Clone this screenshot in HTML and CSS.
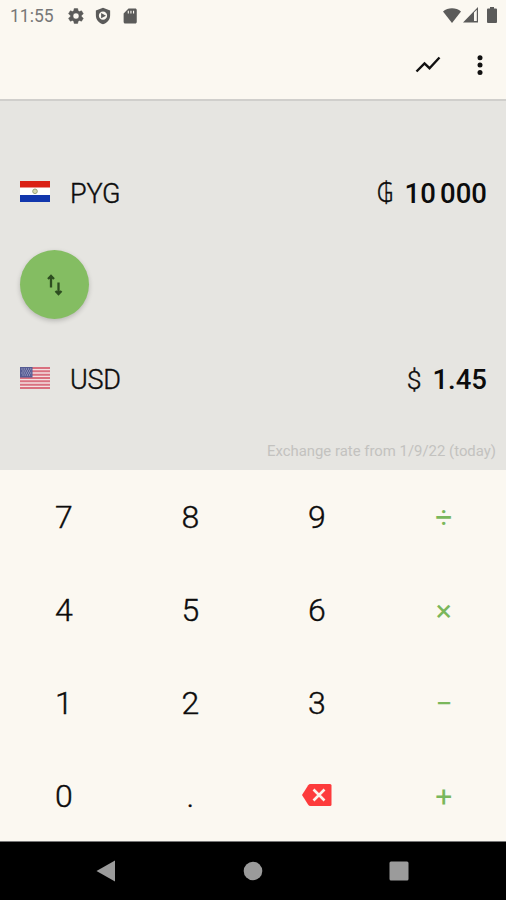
FILE: index.html
```html
<!DOCTYPE html>
<html lang="en">
<head>
    <meta charset="UTF-8">
    <meta name="viewport" content="width=device-width, initial-scale=1.0">
    <title>Currency Converter</title>
    <link rel="stylesheet" href="styles.css">
</head>
<body>
    <div class="status-bar">
        <span class="clock">11:55</span>
        <svg class="status-icon gear" width="18" height="18" viewBox="0 0 24 24"><path fill-rule="evenodd" d="M19.4 13a7.500 7.500 0 0 0 0-2l2.100-1.600a.5.5 0 0 0 .1-.7l-2-3.400a.5.5 0 0 0-.6-.2l-2.500 1a7.300 7.300 0 0 0-1.700-1L14.400 2.400a.5.5 0 0 0-.5-.4h-4a.5.5 0 0 0-.5.4L9 5.100a7.700 7.700 0 0 0-1.700 1l-2.500-1a.5.5 0 0 0-.6.200l-2 3.400a.5.5 0 0 0 .1.700L4.500 11a7.500 7.500 0 0 0 0 2l-2.200 1.600a.5.5 0 0 0-.1.700l2 3.400c.1.200.4.300.6.200l2.500-1c.5.400 1.100.700 1.700 1l.4 2.700c0 .2.200.4.500.4h4c.3 0 .5-.2.500-.4l.4-2.700a7.300 7.300 0 0 0 1.700-1l2.500 1c.2.100.5 0 .6-.2l2-3.400a.5.5 0 0 0-.1-.7zM12 16a4 4 0 1 1 0-8 4 4 0 0 1 0 8z"/></svg>
        <svg class="status-icon shield" width="18" height="18" viewBox="0 0 24 24"><path fill-rule="evenodd" d="M12 1 2.500 4.500V11c0 6 4 10.500 9.500 12 5.500-1.500 9.500-6 9.500-12V4.500zM12 6a5.500 5.500 0 1 1 0 11 5.500 5.500 0 0 1 0-11zM9.500 8v7l6.500-3.500z"/></svg>
        <svg class="status-icon card" width="18" height="18" viewBox="0 0 24 24"><path fill-rule="evenodd" d="M19 2h-9L3.500 8.500V20c0 1.100.9 2 2 2H19c1.100 0 2-.9 2-2V4c0-1.100-.9-2-2-2zM9 5h1.500v3.500H9zM12.500 5H14v3.500h-1.500zM16 5h1.500v3.500H16z"/></svg>
        <div class="system-icons">
            <svg class="status-icon" width="18" height="15" viewBox="0 0 18 15"><path d="M9 15 0 3.500C5 -.8 13-.8 18 3.500z"/></svg>
            <svg class="status-icon signal" width="16" height="16" viewBox="0 0 16 16"><path d="M0 15.500 15 0v15.500zM11 5.500V14h2.800V2.700z" fill-rule="evenodd"/></svg>
            <svg class="status-icon battery" width="10" height="16" viewBox="0 0 10 16"><path d="M3 0h4v1.500h2q1 0 1 1V15q0 1-1 1H1q-1 0-1-1V2.500q0-1 1-1h2z"/></svg>
        </div>
    </div>

    <div class="app-bar">
        <svg class="chart" width="26" height="18" viewBox="0 0 26 18"><path d="M1.500 15.500 9.500 7.500l5 4.700L24.500 1.500"/></svg>
        <svg class="more" width="6" height="20" viewBox="0 0 6 20"><circle cx="3" cy="2.700" r="2.500"/><circle cx="3" cy="10" r="2.500"/><circle cx="3" cy="17.500" r="2.500"/></svg>
    </div>

    <div class="converter">
        <div class="currency-row">
            <svg class="flag" width="30" height="21" viewBox="0 0 30 21">
                <rect width="30" height="21" fill="#fff"/>
                <rect width="30" height="6.500" fill="#da2015"/>
                <rect y="14" width="30" height="7" fill="#1237ad"/>
                <circle cx="15" cy="10.300" r="2.300" fill="#d9d9b0" stroke="#9aa57c"/>
            </svg>
            <span class="code">PYG</span>
            <span class="symbol guarani">₲</span>
            <span class="amount">10 000</span>
        </div>
        <button type="button" class="swap-button" aria-label="Swap">
            <svg width="18" height="22" viewBox="0 0 18 22"><path d="M5 13.500V2M2 5 5 2 8 5M12.500 8.500V20M9.500 17l3 3 3-3"/></svg>
        </button>
        <div class="currency-row">
            <svg class="flag" width="30" height="22" viewBox="0 0 30 22">
                <rect width="30" height="22" fill="#f3dfe0"/>
                <path d="M0 1h30M0 4.300h30M0 7.700h30M0 11h30M0 14.300h30M0 17.700h30M0 21h30" stroke="#d9707f" stroke-width="1.900"/>
                <rect width="12.500" height="10.500" fill="#555b93"/>
                <path d="M1.500 2h10M2.500 4h9M1.500 6h10M2.500 8h9" stroke="#c3c6df" stroke-width="1" stroke-dasharray="1 1.200"/>
            </svg>
            <span class="code">USD</span>
            <span class="symbol">$</span>
            <span class="amount">1.45</span>
        </div>
        <div class="rate">Exchange rate from 1/9/22 (today)</div>
    </div>

    <div class="keypad">
        <button type="button">7</button>
        <button type="button">8</button>
        <button type="button">9</button>
        <button type="button" class="operator">÷</button>
        <button type="button">4</button>
        <button type="button">5</button>
        <button type="button">6</button>
        <button type="button" class="operator">×</button>
        <button type="button">1</button>
        <button type="button">2</button>
        <button type="button">3</button>
        <button type="button" class="operator">−</button>
        <button type="button">0</button>
        <button type="button">.</button>
        <button type="button" aria-label="Delete">
            <svg class="backspace" width="30" height="22" viewBox="0 0 30 22"><path d="M8.500 0H28q1.500 0 1.500 1.500v19Q29.500 22 28 22H8.500Q7 22 6.200 20.800L0 11 6.200 1.200Q7 0 8.500 0z" fill="#fd3b3c"/><path d="M11.500 5.500l11 11M22.500 5.500l-11 11" stroke="#fcf3eb" stroke-width="2.600"/></svg>
        </button>
        <button type="button" class="operator">+</button>
    </div>

    <div class="nav-bar">
        <svg width="20" height="22" viewBox="0 0 20 22"><path d="M19 .5v21L.5 11z"/></svg>
        <svg width="20" height="20" viewBox="0 0 20 20"><circle cx="10" cy="10" r="9.300"/></svg>
        <svg width="20" height="20" viewBox="0 0 20 20"><rect x=".5" y=".5" width="19" height="19" rx="1.500"/></svg>
    </div>
</body>
</html>
```
FILE: styles.css
```css
* {
    box-sizing: border-box;
}
body {
    font-family: Roboto, sans-serif;
    background: #fbf8f1;
    color: #0c0c0c;
    margin: 0;
    height: 900px;
    display: flex;
    flex-direction: column;
    overflow: hidden;
}
svg {
    display: block;
    flex-shrink: 0;
}
.status-bar {
    height: 32px;
    padding: 0 9px 0 10px;
    display: flex;
    align-items: center;
}
.clock {
    width: 57px;
    font-size: 17.5px;
    color: #777;
}
.status-icon {
    fill: #5b5b5a;
}
.gear {
    stroke: #5b5b5a;
    stroke-width: 0.6;
}
.shield {
    margin-left: 9px;
}
.card {
    margin-left: 9px;
}
.system-icons {
    display: flex;
    align-items: center;
    margin: -2px 0 0 auto;
}
.signal {
    margin-left: 2px;
}
.battery {
    margin-left: 8px;
}
.app-bar {
    height: 67px;
    padding: 0 23px 2px 0;
    display: flex;
    align-items: center;
    justify-content: flex-end;
    gap: 36px;
}
.chart {
    fill: none;
    stroke: #111;
    stroke-width: 2.4;
}
.more {
    fill: #111;
}
.converter {
    height: 371px;
    padding: 62px 10px 0 20px;
    background: #e6e5e1;
    border-top: 2px solid #d0cfcc;
}
.currency-row {
    height: 60px;
    padding: 1px 9px 0 0;
    display: flex;
    align-items: center;
    font-size: 27px;
}
.flag {
    margin: 0 20px 4px 0;
}
.code {
    font-weight: 300;
    letter-spacing: -0.2px;
    -webkit-text-stroke: 0.4px;
}
.symbol {
    margin-left: auto;
    font-size: 26.5px;
    font-weight: 300;
    -webkit-text-stroke: 0.4px;
}
/* fallback glyph is wider than Roboto Light and sits lower */
.guarani {
    font-family: "Noto Sans", sans-serif;
    font-size: 27px;
    margin-bottom: 4px;
    transform: scaleX(0.86);
    transform-origin: right;
}
.amount {
    margin-left: 11px;
    font-size: 27.5px;
    font-weight: 500;
    word-spacing: -2.5px;
}
.swap-button {
    width: 69px;
    height: 69px;
    margin: 27px 0 30px;
    padding: 0;
    display: flex;
    align-items: center;
    justify-content: center;
    background: #84bd62;
    border: none;
    border-radius: 50%;
    box-shadow: 0 2px 5px rgba(0, 0, 0, 0.2);
}
.swap-button path {
    fill: none;
    stroke: #2d4d20;
    stroke-width: 2.3;
}
.rate {
    margin-top: 33px;
    text-align: right;
    font-size: 14.9px;
    line-height: 18px;
    color: #c3c2bf;
}
.keypad {
    height: 371px;
    display: grid;
    grid-template-columns: repeat(4, 1fr);
    grid-template-rows: repeat(4, 1fr);
}
.keypad button {
    display: flex;
    align-items: center;
    justify-content: center;
    padding: 2px 0 0 1px;
    background: none;
    border: none;
    font-family: inherit;
    font-size: 32px;
    font-weight: 300;
    color: #0c0c0c;
    -webkit-text-stroke: 0.4px;
}
.keypad .operator {
    padding: 3px 0 0 2px;
    font-size: 30px;
    font-weight: 400;
    color: #7ab75b;
    -webkit-text-stroke: 0;
}
.backspace {
    margin-bottom: 1px;
}
.nav-bar {
    height: 59px;
    padding: 0 97px 0 96px;
    display: flex;
    align-items: center;
    justify-content: space-between;
    background: #000;
    border-top: 1px solid #777;
}
.nav-bar svg {
    fill: #9b9b9b;
}
```
